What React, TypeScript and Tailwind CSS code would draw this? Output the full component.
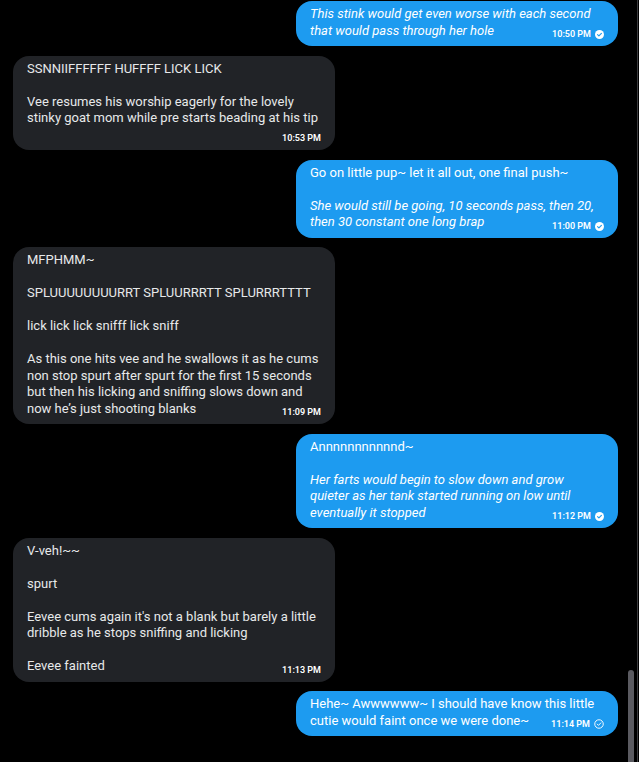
type Line = { t: string; i?: boolean };

type Msg = {
  mine: boolean;
  lines: Line[];
  time: string;
  status?: "read" | "sent";
  tsOwnLine?: boolean;
};

const messages: Msg[] = [
  {
    mine: true,
    lines: [
      { t: "This stink would get even worse with each second", i: true },
      { t: "that would pass through her hole", i: true },
    ],
    time: "10:50 PM",
    status: "read",
  },
  {
    mine: false,
    lines: [
      { t: "SSNNIIFFFFFF HUFFFF LICK LICK" },
      { t: "" },
      { t: "Vee resumes his worship eagerly for the lovely" },
      { t: "stinky goat mom while pre starts beading at his tip" },
    ],
    time: "10:53 PM",
    tsOwnLine: true,
  },
  {
    mine: true,
    lines: [
      { t: "Go on little pup~ let it all out, one final push~" },
      { t: "" },
      { t: "She would still be going, 10 seconds pass, then 20,", i: true },
      { t: "then 30 constant one long brap", i: true },
    ],
    time: "11:00 PM",
    status: "read",
  },
  {
    mine: false,
    lines: [
      { t: "MFPHMM~" },
      { t: "" },
      { t: "SPLUUUUUUUURRT SPLUURRRTT SPLURRRTTTT" },
      { t: "" },
      { t: "lick lick lick snifff lick sniff" },
      { t: "" },
      { t: "As this one hits vee and he swallows it as he cums" },
      { t: "non stop spurt after spurt for the first 15 seconds" },
      { t: "but then his licking and sniffing slows down and" },
      { t: "now he\u2019s just shooting blanks" },
    ],
    time: "11:09 PM",
  },
  {
    mine: true,
    lines: [
      { t: "Annnnnnnnnnnd~" },
      { t: "" },
      { t: "Her farts would begin to slow down and grow", i: true },
      { t: "quieter as her tank started running on low until", i: true },
      { t: "eventually it stopped", i: true },
    ],
    time: "11:12 PM",
    status: "read",
  },
  {
    mine: false,
    lines: [
      { t: "V-veh!~~" },
      { t: "" },
      { t: "spurt" },
      { t: "" },
      { t: "Eevee cums again it's not a blank but barely a little" },
      { t: "dribble as he stops sniffing and licking" },
      { t: "" },
      { t: "Eevee fainted" },
    ],
    time: "11:13 PM",
  },
  {
    mine: true,
    lines: [
      { t: "Hehe~ Awwwwww~ I should have know this little" },
      { t: "cutie would faint once we were done~" },
    ],
    time: "11:14 PM",
    status: "sent",
  },
];

function ReadIcon() {
  return (
    <svg width="9" height="9" viewBox="0 0 16 16">
      <circle cx="8" cy="8" r="8" fill="#ffffff" />
      <path d="M4.6 8.3l2.3 2.3 4.5-4.7" fill="none" stroke="#1d9bf0" strokeWidth="2" strokeLinecap="round" strokeLinejoin="round" />
    </svg>
  );
}

function SentIcon() {
  return (
    <svg width="10" height="10" viewBox="0 0 16 16">
      <circle cx="8" cy="8" r="6.8" fill="none" stroke="#ffffff" strokeWidth="1.5" />
      <path d="M5.2 8.2l2 2 3.8-4" fill="none" stroke="#ffffff" strokeWidth="1.5" strokeLinecap="round" strokeLinejoin="round" />
    </svg>
  );
}

function Bubble({ m }: { m: Msg }) {
  return (
    <div className={`flex ${m.mine ? "justify-end" : "justify-start"}`}>
      <div
        className={`relative w-[322px] rounded-[16px] px-[14px] pt-[5px] pb-[7px] text-[13px] leading-[16.5px] ${
          m.mine ? "bg-[#1d9bf0] text-white" : "bg-[#212327] text-[#e7e9ea]"
        }`}
      >
        {m.lines.map((l, idx) =>
          l.t === "" ? (
            <div key={idx} className="h-[16.5px]" />
          ) : (
            <div key={idx} className={`whitespace-nowrap ${l.i ? "italic" : ""}`}>
              {l.t}
            </div>
          )
        )}
        {m.tsOwnLine && <div className="h-[16.5px]" />}
        <div className="absolute bottom-[7px] right-[14px] flex items-center gap-[4px] text-[9px] font-semibold leading-[9px] text-white">
          <span>{m.time}</span>
          {m.status === "read" && <ReadIcon />}
          {m.status === "sent" && <SentIcon />}
        </div>
      </div>
    </div>
  );
}

export default function App() {
  return (
    <div className="relative h-[762px] w-[639px] overflow-hidden bg-black font-['Roboto',sans-serif]">
      <div className="flex flex-col gap-[9.5px] pl-[13px] pr-[21px] pt-[1px]">
        {messages.map((m, i) => (
          <Bubble key={i} m={m} />
        ))}
      </div>
      <div className="absolute right-[5px] top-[670px] h-[100px] w-[6px] rounded-full bg-[#5b5b61]" />
      <div className="absolute right-[1px] top-0 h-full w-px bg-[#3c3c3f]" />
    </div>
  );
}
